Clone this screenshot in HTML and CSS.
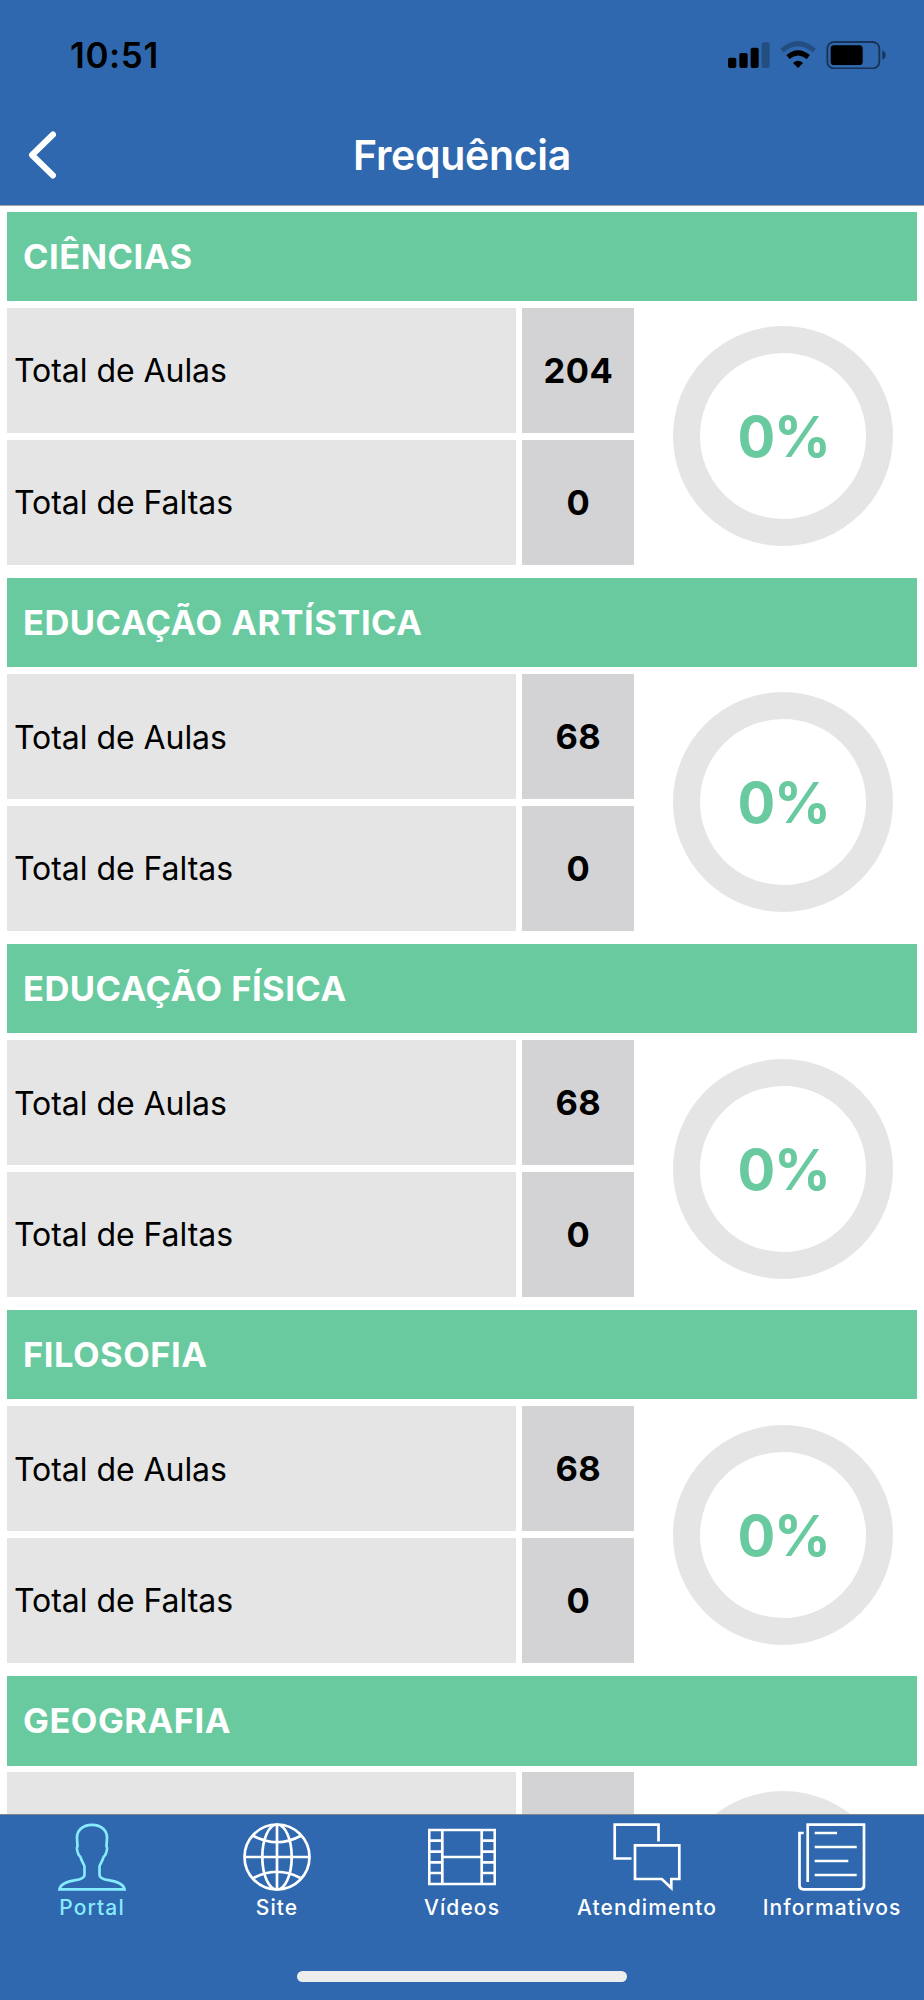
FILE: index.html
```html
<!DOCTYPE html>
<html lang="pt-BR">
<head>
  <meta charset="UTF-8">
  <meta name="viewport" content="width=device-width, initial-scale=1.0">
  <title>Frequência</title>
  <link rel="stylesheet" href="styles.css">
</head>
<body>

  <header class="header">
    <div class="status-bar">
      <span class="clock">10:51</span>
      <svg class="status-icons" viewBox="0 0 474 84">
        <!-- signal -->
        <rect x="0" y="50" width="25" height="31" rx="6"/>
        <rect x="34" y="36" width="25" height="45" rx="6"/>
        <rect x="68" y="20" width="24" height="61" rx="6"/>
        <rect x="101" y="4" width="24" height="77" rx="6" opacity=".25"/>
        <!-- wifi -->
        <path d="M162 29 Q210 -13 259 29" fill="none" stroke="#000" stroke-width="15" opacity=".25"/>
        <path d="M180 48 Q210 23 241 48" fill="none" stroke="#000" stroke-width="15"/>
        <path d="M195 66 Q210 53 225 66 L210 81 Z"/>
        <!-- battery -->
        <rect x="298" y="3" width="156" height="79" rx="20" fill="none" stroke="#000" stroke-width="5.500" opacity=".5"/>
        <rect x="308" y="13" width="96" height="59" rx="10"/>
        <path d="M463 28 Q473 33 473 42 Q473 51 463 56 Z" opacity=".5"/>
      </svg>
    </div>
    <div class="nav-bar">
      <svg class="back" viewBox="0 0 28 48">
        <path d="M25 3.500 L4 24 L25 44.500"/>
      </svg>
      <h1>Frequência</h1>
    </div>
  </header>

  <main class="list">
    <section class="subject">
      <h2>CIÊNCIAS</h2>
      <div class="subject-body">
        <div class="label">Total de Aulas</div>
        <div class="value">204</div>
        <div class="label">Total de Faltas</div>
        <div class="value">0</div>
        <div class="chart"><div class="ring">0%</div></div>
      </div>
    </section>

    <section class="subject">
      <h2>EDUCAÇÃO ARTÍSTICA</h2>
      <div class="subject-body">
        <div class="label">Total de Aulas</div>
        <div class="value">68</div>
        <div class="label">Total de Faltas</div>
        <div class="value">0</div>
        <div class="chart"><div class="ring">0%</div></div>
      </div>
    </section>

    <section class="subject">
      <h2>EDUCAÇÃO FÍSICA</h2>
      <div class="subject-body">
        <div class="label">Total de Aulas</div>
        <div class="value">68</div>
        <div class="label">Total de Faltas</div>
        <div class="value">0</div>
        <div class="chart"><div class="ring">0%</div></div>
      </div>
    </section>

    <section class="subject">
      <h2>FILOSOFIA</h2>
      <div class="subject-body">
        <div class="label">Total de Aulas</div>
        <div class="value">68</div>
        <div class="label">Total de Faltas</div>
        <div class="value">0</div>
        <div class="chart"><div class="ring">0%</div></div>
      </div>
    </section>

    <section class="subject">
      <h2>GEOGRAFIA</h2>
      <div class="subject-body">
        <div class="label"></div>
        <div class="value"></div>
        <div class="label"></div>
        <div class="value"></div>
        <div class="chart"><div class="ring"></div></div>
      </div>
    </section>
  </main>

  <footer class="footer">
    <nav class="tabs">
      <a class="tab active">
        <svg viewBox="0 0 68 68">
          <path d="M34 1.800 C24 1.800 19 8 19 14.500 C19 18 19.500 21 19.500 23.500 C18 25 19.500 29 20.500 31.500 C21 33 22.500 33 22.700 34.500 C23.500 39 26.500 41 26.500 44 V52 C26.500 55.500 22 56.500 17.500 57.200 C9 58.500 2.500 61.500 1.500 66.300 H66.500 C65.500 61.500 59 58.500 50.500 57.200 C46 56.500 41.500 55.500 41.500 52 V44 C41.500 41 44.500 39 45.300 34.500 C45.500 33 47 33 47.500 31.500 C48.500 29 50 25 48.500 23.500 C48.500 21 49 18 49 14.500 C49 8 44 1.800 34 1.800 Z"/>
        </svg>
        <span>Portal</span>
      </a>
      <a class="tab">
        <svg viewBox="0 0 68 68">
          <circle cx="34" cy="34" r="32.500"/>
          <ellipse cx="34" cy="34" rx="14.700" ry="32.500"/>
          <path d="M34 1.500 V66.500 M1.500 34 H66.500 M10.500 13 Q34 25.500 57.500 13 M10.500 55 Q34 42.500 57.500 55"/>
        </svg>
        <span>Site</span>
      </a>
      <a class="tab">
        <svg viewBox="0 0 68 68">
          <path d="M1.200 7 H66.800 V61 H1.200 Z M14.300 7 V61 M53.700 7 V61 M14.300 34 H53.700"/>
          <path d="M1.200 17.700 H14.300 M1.200 28.700 H14.300 M1.200 39.400 H14.300 M1.200 50 H14.300 M53.700 17.700 H66.800 M53.700 28.700 H66.800 M53.700 39.400 H66.800 M53.700 50 H66.800"/>
        </svg>
        <span>Vídeos</span>
      </a>
      <a class="tab">
        <svg viewBox="0 0 68 68">
          <path d="M45.500 18.500 V1.700 H1.700 V35.500 H18.500"/>
          <path d="M22 22.300 H66.300 V56 H58.300 V65 L48.800 56 H22 Z"/>
        </svg>
        <span>Atendimento</span>
      </a>
      <a class="tab">
        <svg viewBox="0 0 68 68">
          <path d="M9.700 59 V1.700 H66 V62.500 Q66 66.300 62.200 66.300 H5.300 Q1.500 66.300 1.500 62.500 V10 H5.700"/>
          <path d="M16.700 10 H39 M16.700 24 H58.700 M16.700 38 H50.300 M16.700 52 H58.700"/>
        </svg>
        <span>Informativos</span>
      </a>
    </nav>
    <div class="home-indicator"></div>
  </footer>

</body>
</html>
```
FILE: styles.css
```css
* {
  box-sizing: border-box;
}

body {
  margin: 0;
  height: 2000px;
  display: flex;
  flex-direction: column;
  overflow: hidden;
  background: #fff;
  color: #000;
  font-family: Inter, "Liberation Sans", sans-serif;
}

.header {
  height: 206px;
  flex: none;
  background: #2f68ae;
  border-bottom: 1px solid #a3a5a8;
  color: #fff;
}

.status-bar {
  height: 110px;
  padding: 0 38px 0 70px;
  display: flex;
  align-items: center;
  justify-content: space-between;
  color: #000;
}

.clock {
  font-size: 35px;
  font-weight: 600;
  letter-spacing: 0.6px;
}

.status-icons {
  width: 158px;
  height: 28px;
}

.nav-bar {
  height: 90px;
  padding: 0 28px;
  display: grid;
  grid-template-columns: 28px 1fr 28px;
  align-items: center;
}

.back {
  width: 28px;
  height: 48px;
  fill: none;
  stroke: #fff;
  stroke-width: 6;
  stroke-linecap: round;
  stroke-linejoin: round;
}

.nav-bar h1 {
  margin: 0;
  font-size: 41px;
  font-weight: 600;
  letter-spacing: -0.3px;
  text-align: center;
}

.list {
  flex: 1;
  min-height: 0;
  overflow: hidden;
  padding: 6px 7px 0;
}

.subject {
  height: 366.1px;
}

.subject h2 {
  height: 89.200px;
  margin: 0 0 6.800px;
  padding-left: 16px;
  display: flex;
  align-items: center;
  background: #69caa0;
  color: #fff;
  font-size: 34.500px;
  font-weight: 650;
  letter-spacing: 0.5px;
}

.subject-body {
  display: grid;
  grid-template-columns: 508.700px 112px 1fr;
  grid-template-rows: 125px 125px;
  gap: 6.700px;
}

.label,
.value {
  display: flex;
  align-items: center;
}

.label {
  padding: 1px 0 0 7px;
  background: #e5e5e5;
  font-size: 32px;
  letter-spacing: -0.05px;
}

.value {
  justify-content: center;
  background: #d3d3d5;
  font-size: 34.500px;
  font-weight: 650;
  letter-spacing: 0.5px;
}

.chart {
  grid-column: 3;
  grid-row: 1 / 3;
  padding-left: 8px;
  display: flex;
  align-items: center;
  justify-content: center;
}

.ring {
  width: 220px;
  height: 220px;
  padding: 2px 0 0 1px;
  border: 27px solid #e5e5e5;
  border-radius: 50%;
  display: flex;
  align-items: center;
  justify-content: center;
  color: #69caa0;
  font-size: 56px;
  font-weight: 650;
  letter-spacing: -1.2px;
}

.footer {
  height: 186px;
  flex: none;
  background: #2f68ae;
  border-top: 1px solid #7f8791;
}

.tabs {
  height: 156px;
  display: grid;
  grid-template-columns: repeat(5, 185px);
  justify-content: center;
}

.tab {
  padding-top: 8px;
  display: flex;
  flex-direction: column;
  align-items: center;
  color: #fff;
  font-size: 21px;
  font-weight: 500;
  letter-spacing: 1.1px;
}

.tab svg {
  width: 68px;
  height: 68px;
  fill: none;
  stroke: currentColor;
  stroke-width: 2.700;
}

.tab span {
  margin-top: 4px;
}

.tab.active {
  color: #86ecfd;
}

.home-indicator {
  width: 330px;
  height: 11px;
  margin: 0 auto;
  border-radius: 6px;
  background: #ededed;
}
```
